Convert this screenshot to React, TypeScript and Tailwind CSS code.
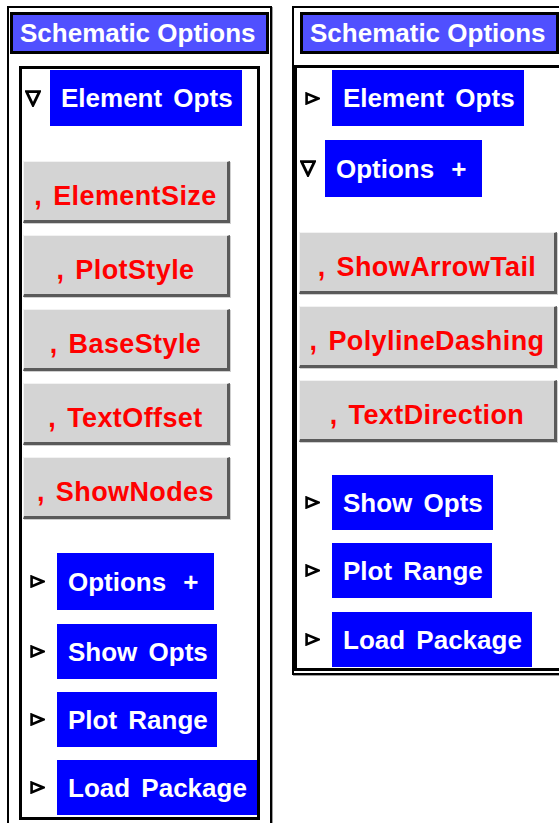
const FONT = "font-['Liberation_Sans',Arial,sans-serif]";

function ClosedTri() {
  return (
    <svg width="15" height="13" viewBox="0 0 15 13" className="shrink-0">
      <polygon points="1.6,1.6 13.2,6.5 1.6,11.4" fill="none" stroke="#000" strokeWidth="2.6" />
    </svg>
  );
}

function OpenTri() {
  return (
    <svg width="16" height="17" viewBox="0 0 16 17" className="shrink-0">
      <polygon points="1.5,1.7 14.5,1.7 8,15.2" fill="none" stroke="#000" strokeWidth="2.8" />
    </svg>
  );
}

function Title({ className }: { className: string }) {
  return (
    <div
      className={`${className} flex h-[42px] w-[259px] items-center border-[3px] border-black bg-[#5050ff] pl-[7px] text-[26px] leading-none font-bold text-white`}
    >
      Schematic Options
    </div>
  );
}

function Blue({ label, w, h }: { label: React.ReactNode; w: string; h: string }) {
  return (
    <div
      className={`${w} ${h} flex items-center bg-[#0000ff] pl-[11px] text-[26px] leading-none font-bold whitespace-nowrap text-white [word-spacing:4px]`}
    >
      {label}
    </div>
  );
}

function Closed({ label, w, h, className }: { label: React.ReactNode; w: string; h: string; className: string }) {
  return (
    <div className={`${className} flex items-center pl-[8px]`}>
      <ClosedTri />
      <div className="ml-[12px]">
        <Blue label={label} w={w} h={h} />
      </div>
    </div>
  );
}

function Open({ label, w, h, className }: { label: React.ReactNode; w: string; h: string; className: string }) {
  return (
    <div className={`${className} flex items-center pl-[3px]`}>
      <OpenTri />
      <div className="ml-[9px]">
        <Blue label={label} w={w} h={h} />
      </div>
    </div>
  );
}

function Gray({ label, className }: { label: string; className: string }) {
  return (
    <div
      className={`${className} flex h-[62px] items-center justify-center border-t border-l border-t-[#f2f2f2] border-l-[#f2f2f2] border-r-[3px] border-b-[3px] border-r-[#5a5a5a] border-b-[#5a5a5a] bg-[#d4d4d4] pt-[10px] text-[27px] leading-none font-bold tracking-[0.4px] whitespace-nowrap text-[#ff0000] shadow-[1px_1px_0_0_#cfcfcf] [word-spacing:3px]`}
    >
      , {label}
    </div>
  );
}

const optionsPlus = (
  <>
    <span>Options</span>
    <span className="ml-[17px]">+</span>
  </>
);

export default function App() {
  return (
    <div className={`${FONT} flex h-[823px] w-[559px] items-start overflow-hidden bg-white`}>
      {/* LEFT PALETTE */}
      <div className="mt-[6px] ml-[7px] w-[265px] shrink-0 border-2 border-black pt-[4px] pb-[3px] shadow-[1px_1px_0_0_#9e9e9e]">
        <Title className="ml-[1px]" />
        <div className="mt-[12px] ml-[10px] w-[241px] border-[3px] border-black pt-[1px] pb-[2px]">
          <Open label="Element Opts" w="w-[192px]" h="h-[56px]" className="" />

          <Gray label="ElementSize" className="mt-[35px] ml-[1px] w-[207px]" />
          <Gray label="PlotStyle" className="mt-[12px] ml-[1px] w-[207px]" />
          <Gray label="BaseStyle" className="mt-[12px] ml-[1px] w-[207px]" />
          <Gray label="TextOffset" className="mt-[12px] ml-[1px] w-[207px]" />
          <Gray label="ShowNodes" className="mt-[12px] ml-[1px] w-[207px]" />

          <Closed label={optionsPlus} w="w-[157px]" h="h-[57px]" className="mt-[34px]" />
          <Closed label="Show Opts" w="w-[160px]" h="h-[55px]" className="mt-[14px]" />
          <Closed label="Plot Range" w="w-[160px]" h="h-[55px]" className="mt-[13px]" />
          <Closed label="Load Package" w="w-[200px]" h="h-[55px]" className="mt-[13px]" />
        </div>
      </div>

      {/* RIGHT PALETTE */}
      <div className="mt-[6px] ml-[20px] w-[280px] shrink-0 border-2 border-black pt-[4px] pb-[2px] shadow-[1px_1px_0_0_#9e9e9e]">
        <Title className="ml-[6px]" />
        <div className="mt-[11px] w-[276px] border-[3px] border-black pt-[2px] pb-[1px]">
          <Closed label="Element Opts" w="w-[192px]" h="h-[56px]" className="" />
          <Open label={optionsPlus} w="w-[157px]" h="h-[57px]" className="mt-[14px]" />

          <Gray label="ShowArrowTail" className="mt-[35px] ml-[2px] w-[258px]" />
          <Gray label="PolylineDashing" className="mt-[12px] ml-[2px] w-[258px]" />
          <Gray label="TextDirection" className="mt-[12px] ml-[2px] w-[258px]" />

          <Closed label="Show Opts" w="w-[161px]" h="h-[55px]" className="mt-[33px]" />
          <Closed label="Plot Range" w="w-[160px]" h="h-[55px]" className="mt-[13px]" />
          <Closed label="Load Package" w="w-[200px]" h="h-[55px]" className="mt-[14px]" />
        </div>
      </div>
    </div>
  );
}
